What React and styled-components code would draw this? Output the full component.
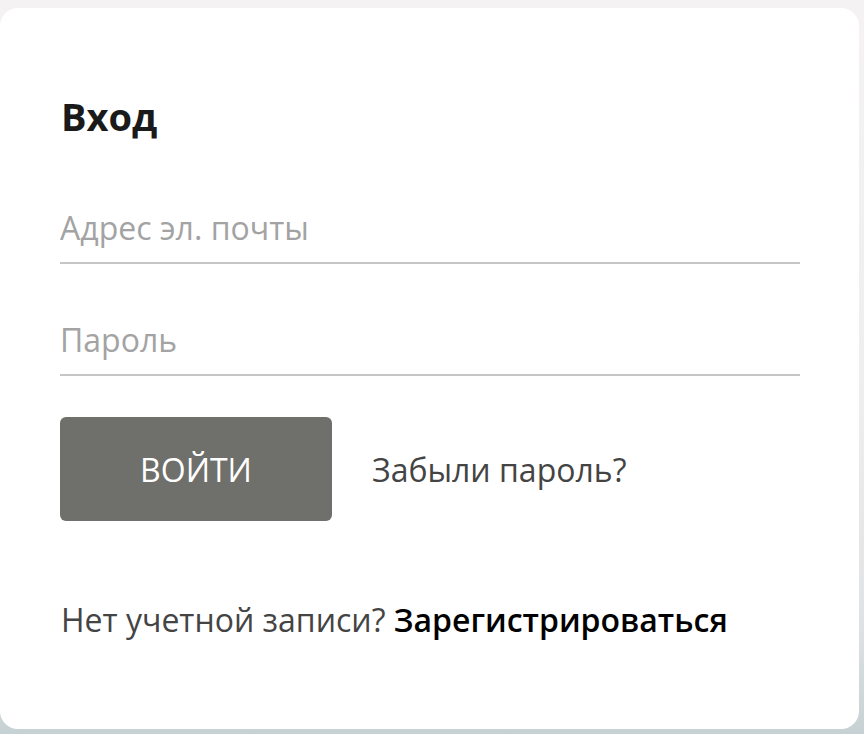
import React from "react"
import styled, { createGlobalStyle } from "styled-components"

const GlobalStyle = createGlobalStyle`
  html, body {
    margin: 0;
    padding: 0;
    height: 100%;
  }
  body {
    font-family: "Open Sans", "Liberation Sans", sans-serif;
    background: linear-gradient(180deg, #f4f2f2 0%, #efeeee 55%, #dfe2e3 85%, #c6d1d3 100%);
  }
`

const Page = styled.div`
  width: 864px;
  height: 734px;
  padding-top: 8px;
  box-sizing: border-box;
`

const Card = styled.form`
  width: 859px;
  height: 721px;
  box-sizing: border-box;
  background: #fff;
  border-radius: 18px;
  padding: 83px 59px 0 60px;
  display: flex;
  flex-direction: column;
`

const Title = styled.h1`
  margin: 0 0 0 1px;
  font-size: 38px;
  font-weight: 700;
  color: #1a1a1a;
  line-height: 50px;
`

const Field = styled.input`
  display: block;
  width: 100%;
  box-sizing: border-box;
  border: none;
  border-bottom: 2px solid #c6c6c6;
  outline: none;
  background: transparent;
  font-family: inherit;
  font-size: 32px;
  line-height: 44px;
  height: 64px;
  color: #333;
  padding: 5px 0 13px 0;
  margin-top: ${p => p.$gap}px;

  &::placeholder {
    color: #a3a3a3;
  }
`

const Actions = styled.div`
  display: flex;
  align-items: center;
  gap: 40px;
  margin-top: 41px;
`

const SubmitButton = styled.button`
  width: 272px;
  height: 104px;
  border: none;
  border-radius: 6px;
  background: #6f6f6b;
  color: #fff;
  font-family: inherit;
  font-size: 32px;
  text-transform: uppercase;
  cursor: pointer;
`

const Forgot = styled.a`
  font-size: 32px;
  color: #444;
  text-decoration: none;
`

const Footer = styled.p`
  margin: 77px 0 0 1px;
  font-size: 32px;
  line-height: 44px;
  color: #444;
`

const Register = styled.a`
  color: #000;
  font-weight: 600;
  text-decoration: none;
`

const App = () => (
  <Page>
    <GlobalStyle />
    <Card onSubmit={e => e.preventDefault()}>
      <Title>Вход</Title>
      <Field type="email" placeholder="Адрес эл. почты" $gap={59} />
      <Field type="password" placeholder="Пароль" $gap={48} />
      <Actions>
        <SubmitButton type="submit">Войти</SubmitButton>
        <Forgot href="#">Забыли пароль?</Forgot>
      </Actions>
      <Footer>
        Нет учетной записи? <Register href="#">Зарегистрироваться</Register>
      </Footer>
    </Card>
  </Page>
)

export default App
